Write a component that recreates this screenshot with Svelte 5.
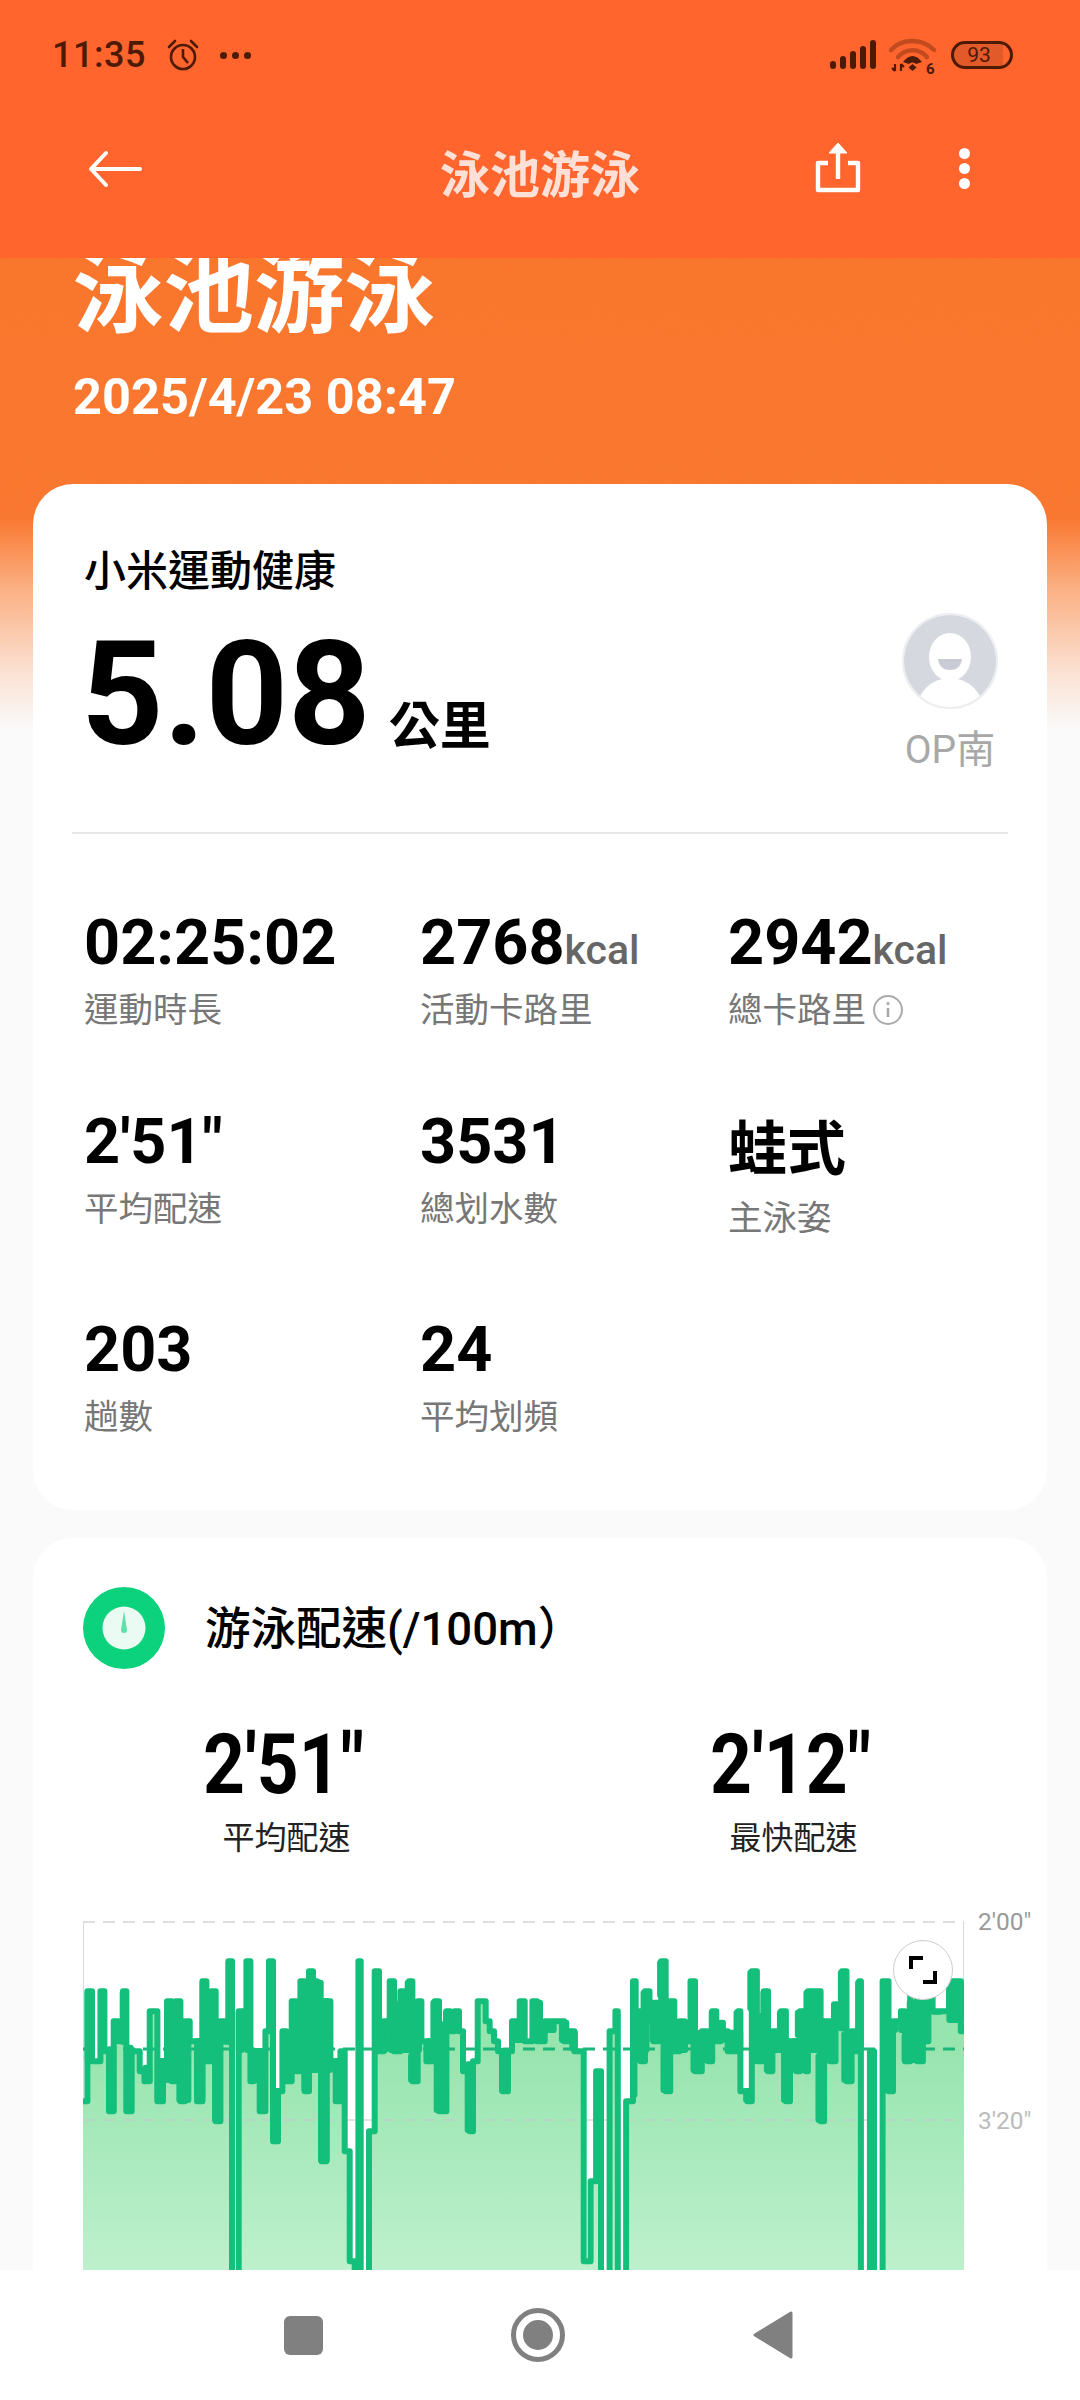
<script>
  // step points read off the chart: [x in crop px, pace level]
  const left = [[70,14],[83,3],[97,10],[122,3],[134,9],[148,15],[162,6],[176,8],[190,3],[200,15],[216,9],[240,11],[254,12],[270,5],[293,14],[310,10],[322,4],[336,12],[348,4],[362,14],[376,6],[390,8],[412,14],[428,2],[440,10],[455,3],[468,16],[482,6],[506,0],[517,40],[537,5],[560,0],[572,12],[582,9],[600,15],[617,7],[628,0],[640,18],[655,13],[668,7],[680,12],[696,4],[710,11],[722,2],[735,13],[748,1],[760,2],[772,9],[785,20],[800,4],[812,10],[828,14],[842,9],[855,19],[870,30],[885,31],[896,0],[903,40],[928,17],[945,1],[958,9],[972,6],[990,2],[1003,9],[1022,3],[1035,8],[1048,2],[1058,12],[1074,4],[1085,8],[1100,10],[1125,4],[1138,15],[1160,5],[1172,7],[1185,5],[1198,7],[1210,11],[1230,17],[1240,10],[1254,4],[1278,6],[1290,7],[1303,8],[1315,9],[1328,13],[1345,9],[1357,6],[1380,4],[1395,8],[1418,4],[1432,8],[1455,6]];
  const right = [[50,6],[70,8],[85,7],[100,9],[127,30],[147,22],[163,11],[177,40],[202,7],[219,5],[226,40],[250,14],[270,2],[278,5],[292,10],[305,3],[318,6],[330,8],[352,0],[365,13],[378,4],[390,9],[405,6],[420,8],[437,2],[450,11],[470,7],[488,10],[500,5],[512,8],[525,7],[545,9],[575,5],[582,13],[602,14],[615,1],[630,10],[650,3],[662,11],[675,7],[700,5],[714,14],[726,8],[745,11],[755,5],[772,11],[778,3],[805,3],[815,16],[825,6],[842,10],[858,5],[877,1],[890,12],[905,7],[915,9],[927,2],[932,40],[958,9],[970,40],[995,2],[1012,13],[1025,6],[1048,5],[1060,10],[1075,3],[1095,10],[1112,8],[1128,3],[1140,5],[1172,5],[1188,2],[1222,7]];

  // solid bands where samples run too close to tell apart: [x1, x2, top, bottom]
  const bandsLeft = [[75,103,275,495],[115,140,275,465],[140,170,445,645],[155,207,365,435],[180,207,275,440],[192,222,440,645],[248,278,500,555],[285,317,480,615],[315,368,305,555],[350,395,365,615],[405,437,420,615],[420,447,245,495],[447,473,275,495],[457,490,365,675],[473,525,365,440],[498,525,185,440],[528,555,335,465],[553,580,185,465],[565,622,450,555],[592,622,450,645],[632,663,570,735],[662,820,395,525],[688,820,305,500],[715,792,245,500],[740,768,215,300],[725,755,500,585],[775,810,300,795],[820,845,480,615],[937,963,215,465],[955,985,365,465],[985,1012,245,465],[1012,1087,305,465],[1035,1062,245,400],[1045,1075,465,555],[1097,1125,420,495],[1112,1140,305,440],[1122,1155,370,645],[1150,1205,335,405],[1215,1247,490,705],[1318,1350,450,585],[1350,1385,365,435],[1373,1400,305,435],[1412,1450,305,435],[1450,1490,365,405]];
  const bandsRight = [[0,48,365,405],[55,85,365,435],[85,110,395,460],[157,185,515,845],[262,283,245,600],[280,305,335,495],[292,318,275,465],[318,390,305,435],[340,365,185,300],[350,380,435,585],[380,430,365,465],[430,452,245,400],[437,465,395,525],[465,502,395,495],[490,515,335,435],[515,540,365,435],[540,590,395,465],[562,588,335,465],[590,618,570,615],[602,628,215,340],[625,660,345,495],[640,665,275,400],[650,675,495,525],[665,715,395,465],[688,715,335,420],[700,730,420,615],[730,780,420,525],[740,780,335,420],[765,815,275,465],[800,830,465,675],[815,855,365,495],[845,870,310,400],[865,890,215,400],[875,905,400,555],[890,925,395,465],[915,940,245,460],[950,978,455,1200],[1003,1028,365,585],[1013,1040,365,405],[1040,1070,335,405],[1050,1100,405,495],[1065,1135,305,435],[1135,1170,335,350],[1180,1232,245,375],[1215,1232,375,405]];

  const xLeft = (x) => x / 3 - 23.3;
  const xRight = (x) => 457 + x / 2.904;
  const yOf = (l) => 53.3 + l * 10;
  const yCrop = (y) => y / 3 - 10;

  const pts = [
    ...left.map(([x, l]) => [xLeft(x), yOf(l)]),
    ...right.map(([x, l]) => [xRight(x), yOf(l)])
  ];

  const bands = [
    ...bandsLeft.map(([a, b, t, u]) => ({ x: xLeft(a), w: (b - a) / 3, y: yCrop(t), h: (u - t) / 3 })),
    ...bandsRight.map(([a, b, t, u]) => ({ x: xRight(a), w: (b - a) / 2.904, y: yCrop(t), h: (u - t) / 3 }))
  ];

  const endX = 881;
  let line = `M0 ${pts[0][1]}`;
  for (const [x, y] of pts.slice(1)) {
    line += `H${x.toFixed(1)}V${y}`;
  }
  line += `H${endX}`;
  const area = `${line}V480H0Z`;

  const rows = [
    [
      { value: "02:25:02", label: "運動時長" },
      { value: "2768", unit: "kcal", label: "活動卡路里" },
      { value: "2942", unit: "kcal", label: "總卡路里", info: true }
    ],
    [
      { value: "2'51\"", label: "平均配速" },
      { value: "3531", label: "總划水數" },
      { value: "蛙式", label: "主泳姿", cjk: true }
    ],
    [
      { value: "203", label: "趟數" },
      { value: "24", label: "平均划頻" },
      null
    ]
  ];
</script>

<div class="phone">
  <header class="top">
    <div class="status">
      <span class="time">11:35</span>
      <svg class="alarm" width="34" height="34" viewBox="0 0 34 34" fill="none" stroke="#4d1a06" stroke-width="2.6">
        <circle cx="17" cy="19" r="12" />
        <path d="M17 11v8l5 6" />
        <path d="M3 9l6-6M31 9l-6-6" stroke-linecap="round" />
      </svg>
      <span class="dots"><i></i><i></i><i></i></span>
      <span class="grow"></span>
      <svg class="signal" width="46" height="30" viewBox="0 0 46 30" fill="#4d1a06">
        <rect x="0" y="21" width="6" height="8" rx="3" />
        <rect x="10" y="16" width="6" height="13" rx="3" />
        <rect x="20" y="11" width="6" height="18" rx="3" />
        <rect x="30" y="6" width="6" height="23" rx="3" />
        <rect x="40" y="0" width="6" height="29" rx="3" />
      </svg>
      <svg class="wifi" width="48" height="42" viewBox="0 0 48 42">
        <path d="M2 13C13 1 33 1 45 13" fill="none" stroke="#4d1a06" stroke-opacity=".35" stroke-width="4.5" stroke-linecap="round" />
        <path d="M9 20C17 11 30 11 38 20" fill="none" stroke="#4d1a06" stroke-opacity=".35" stroke-width="4.5" stroke-linecap="round" />
        <path d="M14 25C20 17 27 17 33 25L27 27C25 25 22 25 20 27Z" fill="#4d1a06" />
        <path d="M23.5 27l4 3.5-4 3.5-4-3.5Z" fill="#4d1a06" />
        <path d="M6 27v7M6 34l-3-3M12 34v-7M12 27l3 3" fill="none" stroke="#4d1a06" stroke-width="2.2" />
        <text x="37" y="37" font-size="15" font-weight="700" fill="#4d1a06" font-family="Roboto, sans-serif">6</text>
      </svg>
      <span class="battery">93</span>
    </div>
    <div class="toolbar">
      <svg class="back" width="56" height="38" viewBox="0 0 56 38" fill="none" stroke="#fff" stroke-width="4" stroke-linecap="round" stroke-linejoin="round">
        <path d="M53 19H4M19 3L4 19l15 16" />
      </svg>
      <h1 class="bar-title">泳池游泳</h1>
      <svg class="share" width="48" height="52" viewBox="0 0 48 52" fill="none" stroke="#fff" stroke-width="4.4" stroke-linejoin="round">
        <path d="M14 22H4v27h40V22H34" />
        <path d="M24 38V6" />
        <path d="M15 12L24 2l9 10Z" fill="#fff" stroke-width="1" />
      </svg>
      <span class="more"><i></i><i></i><i></i></span>
    </div>
  </header>

  <main class="scroll">
    <section class="hero">
      <svg class="grain" width="1080" height="472">
        <filter id="grain"><feTurbulence type="fractalNoise" baseFrequency="0.7" numOctaves="2" /><feColorMatrix values="0 0 0 0 1  0 0 0 0 .7  0 0 0 0 .3  0 0 0 .5 -.1" /></filter>
        <rect width="1080" height="472" filter="url(#grain)" />
      </svg>
      <h2 class="hero-title">泳池游泳</h2>
      <p class="hero-date">2025/4/23 08:47</p>
    </section>

    <div class="cards">
      <section class="card summary">
        <div class="summary-head">
          <div>
            <p class="brand">小米運動健康</p>
            <p class="distance"><span class="dist-num">5.08</span><span class="dist-unit">公里</span></p>
          </div>
          <div class="user">
            <svg width="96" height="98" viewBox="0 0 96 98">
              <defs><clipPath id="av"><circle cx="48" cy="49" r="46" /></clipPath></defs>
              <circle cx="48" cy="49" r="47" fill="#fff" stroke="#eceef1" stroke-width="2" />
              <g clip-path="url(#av)">
                <rect width="96" height="98" fill="#d5d8df" />
                <ellipse cx="48" cy="45" rx="21" ry="24" fill="#fff" />
                <path d="M36 47h24c-1 8-6 11-12 11s-11-3-12-11Z" fill="#c9ccd4" />
                <ellipse cx="48" cy="100" rx="34" ry="34" fill="#fff" />
              </g>
            </svg>
            <span class="user-name">OP南</span>
          </div>
        </div>
        <div class="divider"></div>
        <div class="stats">
          {#each rows as row}
            {#each row as s}
              {#if s}
                <div class="stat" class:cjk={s.cjk}>
                  <div class="stat-value">{s.value}{#if s.unit}<span class="stat-unit">{s.unit}</span>{/if}</div>
                  <div class="stat-label">
                    {s.label}
                    {#if s.info}
                      <svg class="info" width="32" height="32" viewBox="0 0 32 32" fill="none" stroke="#aaa" stroke-width="2">
                        <circle cx="16" cy="16" r="14" />
                        <path d="M16 14v9M16 8v3" stroke-width="2.6" />
                      </svg>
                    {/if}
                  </div>
                </div>
              {:else}
                <div></div>
              {/if}
            {/each}
          {/each}
        </div>
      </section>

      <section class="card pace">
        <div class="pace-head">
          <svg width="82" height="82" viewBox="0 0 82 82">
            <circle cx="41" cy="41" r="41" fill="#0dd27d" />
            <circle cx="41" cy="41" r="21.5" fill="#eafbf3" />
            <path d="M41 24l3 19a3 3 0 0 1-6 0Z" fill="#5fdfa9" />
          </svg>
          <h3>游泳配速(/100m）</h3>
        </div>
        <div class="pace-vals">
          <div><div class="pace-num">2'51"</div><div class="pace-label">平均配速</div></div>
          <div><div class="pace-num">2'12"</div><div class="pace-label">最快配速</div></div>
        </div>
        <div class="chart">
          <svg class="plot" width="960" height="480" viewBox="0 0 960 480">
            <defs>
              <linearGradient id="fill" gradientUnits="userSpaceOnUse" x1="0" y1="130" x2="0" y2="360">
                <stop offset="0" stop-color="#96e4ae" />
                <stop offset="1" stop-color="#bdf0cc" />
              </linearGradient>
              <clipPath id="plotclip"><rect x="0" y="0" width="881" height="480" /></clipPath>
            </defs>
            <path class="grid-top" d="M0 14H881" />
            <path class="axis" d="M0.5 14V360M880.5 14V360" />
            <g clip-path="url(#plotclip)">
              <path d={area} fill="url(#fill)" />
              <path class="grid-mid" d="M0 212H881" />
              <path class="avg" d="M0 141H881" />
              <path d={line} class="pace-line" />
              {#each bands as b}
                <rect x={b.x} y={b.y} width={b.w} height={b.h} rx="3" class="band" />
              {/each}
            </g>
            <text x="895" y="22" class="tick">2'00"</text>
            <text x="895" y="221" class="tick light">3'20"</text>
          </svg>
          <div class="expand">
            <svg width="28" height="28" viewBox="0 0 28 28" fill="none" stroke="#000" stroke-width="4">
              <path d="M2 13V2h12M26 15v11H14" />
            </svg>
          </div>
        </div>
      </section>
    </div>
  </main>

  <nav class="nav">
    <span class="nav-square"></span>
    <span class="nav-home"><i></i></span>
    <svg width="40" height="48" viewBox="0 0 40 48" fill="#808080" stroke="#808080" stroke-width="3" stroke-linejoin="round">
      <path d="M38 2V46L2 24Z" />
    </svg>
  </nav>
</div>

<style>
  :global(body) {
    margin: 0;
    background: #fafafa;
  }

  .phone {
    width: 1080px;
    height: 2400px;
    display: flex;
    flex-direction: column;
    overflow: hidden;
    font-family: Roboto, "Noto Sans CJK TC", sans-serif;
    color: #000;
  }

  .top {
    height: 258px;
    flex: none;
    background: #ff652d;
  }

  .status {
    height: 110px;
    padding: 0 67px 0 52px;
    display: flex;
    align-items: center;
    box-sizing: border-box;
  }

  .time {
    font-size: 36px;
    font-weight: 500;
    color: #4d1a06;
    letter-spacing: 0.5px;
  }

  .alarm {
    margin-left: 20px;
  }

  .dots {
    margin-left: 20px;
    display: flex;
    gap: 5px;
  }

  .dots i {
    width: 7px;
    height: 7px;
    border-radius: 50%;
    background: #4d1a06;
  }

  .grow {
    flex: 1;
  }

  .wifi {
    margin-left: 13px;
    margin-top: 6px;
  }

  .battery {
    margin-left: 14px;
    width: 62px;
    height: 28px;
    border: 3px solid #4d1a06;
    border-radius: 15px;
    box-sizing: border-box;
    background: linear-gradient(90deg, #e2592a 88%, transparent 88%);
    font-size: 21px;
    line-height: 22px;
    text-align: center;
    color: #4d1a06;
    padding-right: 6px;
  }

  .toolbar {
    height: 148px;
    padding: 0 0 0 87px;
    display: flex;
    align-items: flex-start;
  }

  .back {
    margin-top: 40px;
  }

  .bar-title {
    margin: 36px 0 0 297px;
    width: 202px;
    font-size: 50px;
    line-height: 60px;
    font-weight: 700;
    color: #ffe0d6;
    white-space: nowrap;
  }

  .share {
    margin-left: 172px;
    margin-top: 31px;
  }

  .more {
    margin-left: 97px;
    margin-top: 38px;
    display: flex;
    flex-direction: column;
    gap: 4px;
  }

  .more i {
    width: 11px;
    height: 11px;
    border-radius: 50%;
    background: #fff;
  }

  .scroll {
    flex: 1;
    min-height: 0;
    overflow: hidden;
    position: relative;
  }

  .hero {
    height: 472px;
    padding: 0 0 0 73px;
    box-sizing: border-box;
    position: relative;
    background: linear-gradient(180deg, #f9752b 0, #f9762f 55%, #fbb083 70%, #fbe2d4 88%, #fafafa 100%);
  }

  .grain {
    position: absolute;
    left: 0;
    top: 0;
    opacity: 0.12;
    mask-image: linear-gradient(180deg, #000 55%, transparent 90%);
  }

  .hero-title {
    margin: 0;
    position: relative;
    transform: translateY(-9px);
    font-size: 90.5px;
    line-height: 90px;
    font-weight: 700;
    color: #fff;
  }

  .hero-date {
    margin: 20px 0 0;
    position: relative;
    font-size: 50.5px;
    line-height: 58px;
    font-weight: 700;
    color: #fff;
  }

  .cards {
    margin-top: -246px;
    padding: 0 33px;
    display: flex;
    flex-direction: column;
    gap: 28px;
    position: relative;
  }

  .card {
    background: #fff;
    border-radius: 40px;
  }

  .summary {
    height: 1026px;
    box-sizing: border-box;
    padding: 62px 39px 0;
  }

  .summary-head {
    height: 286px;
    padding: 0 13px 0 12px;
    display: flex;
    justify-content: space-between;
  }

  .brand {
    margin: 0;
    font-size: 42px;
    line-height: 52px;
    font-weight: 500;
  }

  .distance {
    margin: 27px 0 0 -3px;
    display: flex;
    align-items: baseline;
    gap: 18px;
  }

  .dist-num {
    font-size: 144px;
    line-height: 140px;
    font-weight: 700;
  }

  .dist-unit {
    font-size: 51px;
    font-weight: 700;
  }

  .user {
    margin-top: 66px;
    margin-right: -3px;
    display: flex;
    flex-direction: column;
    align-items: center;
    gap: 16px;
  }

  .user-name {
    font-size: 39px;
    line-height: 48px;
    color: #a8a8a8;
  }

  .divider {
    height: 2px;
    background: #e8e8e8;
  }

  .stats {
    margin-top: 72px;
    padding-left: 12px;
    display: grid;
    grid-template-columns: 336px 308px 1fr;
    grid-template-rows: 199px 208px 120px;
  }

  .stat-value {
    font-size: 63px;
    line-height: 74px;
    font-weight: 700;
    white-space: nowrap;
  }

  .stat-unit {
    font-size: 41px;
    line-height: 1;
    font-weight: 500;
    color: #666;
  }

  .stat.cjk .stat-value {
    font-size: 59px;
    line-height: 80px;
    margin-top: 5px;
  }

  .stat-label {
    margin-top: 8px;
    font-size: 34.5px;
    line-height: 44px;
    color: #777;
    display: flex;
    align-items: center;
    gap: 6px;
  }

  .stat.cjk .stat-label {
    margin-top: 6px;
  }

  .pace {
    height: 900px;
  }

  .pace-head {
    padding: 49px 0 0 50px;
    display: flex;
    align-items: center;
    gap: 40px;
  }

  .pace-head h3 {
    margin: 3px 0 0;
    font-size: 45.5px;
    line-height: 52px;
    font-weight: 500;
  }

  .pace-vals {
    margin-top: 46px;
    display: grid;
    grid-template-columns: 1fr 1fr;
    text-align: center;
  }

  .pace-num {
    font-size: 84px;
    line-height: 100px;
    font-weight: 700;
    transform: translateX(-3px) scaleX(0.87);
  }

  .pace-label {
    margin-top: 2px;
    font-size: 32px;
    line-height: 42px;
    color: #222;
  }

  .chart {
    margin: 49px 0 0 50px;
    position: relative;
  }

  .plot {
    display: block;
  }

  .grid-top {
    stroke: #dedede;
    stroke-width: 2;
    stroke-dasharray: 12 8;
    fill: none;
  }

  .grid-mid {
    stroke: #c6c6c6;
    stroke-width: 1;
    stroke-dasharray: 12 8;
    fill: none;
  }

  .axis {
    stroke: #d9d9d9;
    stroke-width: 1;
    fill: none;
  }

  .avg {
    stroke: #1cb67a;
    stroke-width: 3;
    stroke-dasharray: 12 8;
    fill: none;
  }

  .pace-line {
    fill: none;
    stroke: #14bf7b;
    stroke-width: 6;
    stroke-linejoin: round;
    stroke-linecap: round;
  }

  .band {
    fill: #14bf7b;
  }

  .tick {
    font-size: 24.5px;
    font-family: Roboto, sans-serif;
    fill: #999;
  }

  .tick.light {
    fill: #bbb;
  }

  .expand {
    position: absolute;
    left: 810px;
    top: 32px;
    width: 60px;
    height: 60px;
    box-sizing: border-box;
    border-radius: 50%;
    background: #fff;
    border: 1px solid #ccc;
    display: flex;
    align-items: center;
    justify-content: center;
  }

  .nav {
    height: 130px;
    flex: none;
    background: #fff;
    display: grid;
    grid-template-columns: repeat(3, 40px);
    justify-content: center;
    column-gap: 195px;
    justify-items: center;
    align-items: center;
    padding-right: 4px;
  }

  .nav-square {
    width: 39px;
    height: 39px;
    border-radius: 6px;
    background: #808080;
  }

  .nav-home {
    width: 54px;
    height: 54px;
    box-sizing: border-box;
    border: 5px solid #808080;
    border-radius: 50%;
    display: flex;
    align-items: center;
    justify-content: center;
  }

  .nav-home i {
    width: 30px;
    height: 30px;
    border-radius: 50%;
    background: #808080;
  }
</style>
